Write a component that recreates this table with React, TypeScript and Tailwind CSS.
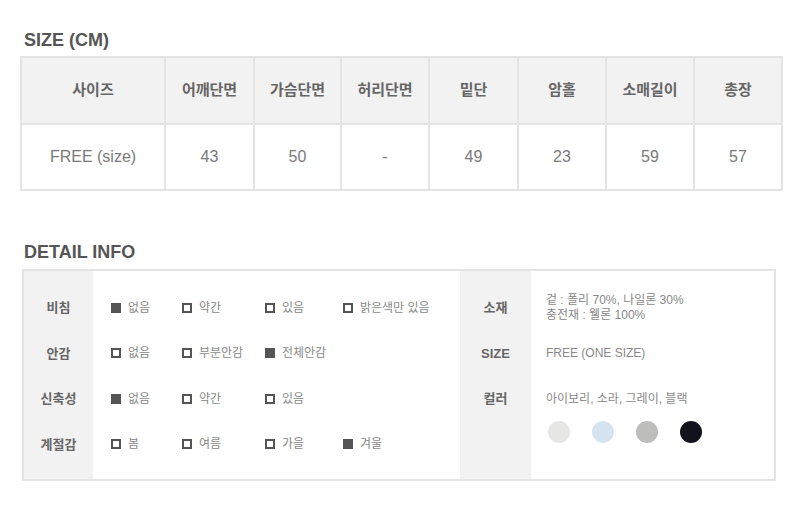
const FONT = "font-['Liberation_Sans','Noto_Sans_CJK_KR',sans-serif]";

const SIZE_COLS = [
  { label: "사이즈", value: "FREE (size)", w: "w-[144px]" },
  { label: "어깨단면", value: "43", w: "w-[89px]" },
  { label: "가슴단면", value: "50", w: "w-[87px]" },
  { label: "허리단면", value: "-", w: "w-[88px]" },
  { label: "밑단", value: "49", w: "w-[89px]" },
  { label: "암홀", value: "23", w: "w-[88px]" },
  { label: "소매길이", value: "59", w: "w-[88px]" },
  { label: "총장", value: "57", w: "w-[88px]" },
];

// each option: [text, checked]
const DETAIL_ROWS: { label: string; options: [string, boolean][] }[] = [
  { label: "비침", options: [["없음", true], ["약간", false], ["있음", false], ["밝은색만 있음", false]] },
  { label: "안감", options: [["없음", false], ["부분안감", false], ["전체안감", true]] },
  { label: "신축성", options: [["없음", true], ["약간", false], ["있음", false]] },
  { label: "계절감", options: [["봄", false], ["여름", false], ["가을", false], ["겨울", true]] },
];

const OPTION_W = ["w-[71px]", "w-[83px]", "w-[78px]", "w-[100px]"];

const SWATCHES = ["bg-[#e6e6e2]", "bg-[#d6e3f0]", "bg-[#bdbdbb]", "bg-[#11121c]"];

function Check({ on }: { on: boolean }) {
  return (
    <span
      className={`inline-block w-[10px] h-[10px] border-2 border-[#555] ${on ? "bg-[#555]" : "bg-white"}`}
    />
  );
}

export default function App() {
  return (
    <div className={`w-[800px] h-[530px] bg-white ${FONT}`}>
      <div className="pt-[28px] pl-[24px] text-[18px] font-bold text-[#555] leading-[24px]">SIZE (CM)</div>

      <table className="ml-[20px] mt-[4px] border-collapse">
        <tbody>
          <tr className="bg-[#f2f2f2]">
            {SIZE_COLS.map(c => (
              <th
                key={c.label}
                className={`${c.w} h-[67px] border-2 border-[#e4e4e4] text-[15px] font-bold text-[#666] text-center`}
              >
                {c.label}
              </th>
            ))}
          </tr>
          <tr>
            {SIZE_COLS.map(c => (
              <td
                key={c.label}
                className="h-[66px] border-2 border-[#e4e4e4] text-[16px] text-[#7a7a7a] text-center"
              >
                {c.value}
              </td>
            ))}
          </tr>
        </tbody>
      </table>

      <div className="pt-[49px] pl-[24px] text-[18px] font-bold text-[#555] leading-[24px]">DETAIL INFO</div>

      <div className="ml-[22px] mt-[5px] w-[754px] h-[212px] flex border-2 border-[#e4e4e4]">
        {/* left labels */}
        <div className="w-[69px] bg-[#f2f2f2] pt-[14px]">
          {DETAIL_ROWS.map(r => (
            <div key={r.label} className="h-[45.5px] flex items-center justify-center text-[13px] font-bold text-[#666]">
              {r.label}
            </div>
          ))}
        </div>

        {/* left options */}
        <div className="w-[367px] pt-[14px] pl-[18px]">
          {DETAIL_ROWS.map(r => (
            <div key={r.label} className="h-[45.5px] flex items-center">
              {r.options.map(([t, on], i) => (
                <div key={t + i} className={`${OPTION_W[i]} flex items-center gap-[7px] text-[12px] text-[#888]`}>
                  <Check on={on} />
                  <span>{t}</span>
                </div>
              ))}
            </div>
          ))}
        </div>

        {/* right labels */}
        <div className="w-[71px] bg-[#f2f2f2] pt-[14px]">
          {["소재", "SIZE", "컬러"].map(l => (
            <div key={l} className="h-[45.5px] flex items-center justify-center text-[13px] font-bold text-[#666]">
              {l}
            </div>
          ))}
        </div>

        {/* right values */}
        <div className="flex-1 pt-[14px] pl-[15px] text-[12px] text-[#888]">
          <div className="h-[45.5px] flex flex-col justify-center leading-[15px]">
            <div>겉 : 폴리 70%, 나일론 30%</div>
            <div>충전재 : 웰론 100%</div>
          </div>
          <div className="h-[45.5px] flex items-center">FREE (ONE SIZE)</div>
          <div className="h-[45.5px] flex items-center">아이보리, 소라, 그레이, 블랙</div>
          <div className="flex gap-[22px] pl-[2px] -mt-[1px]">
            {SWATCHES.map(s => (
              <span key={s} className={`w-[22px] h-[22px] rounded-full ${s}`} />
            ))}
          </div>
        </div>
      </div>
    </div>
  );
}
